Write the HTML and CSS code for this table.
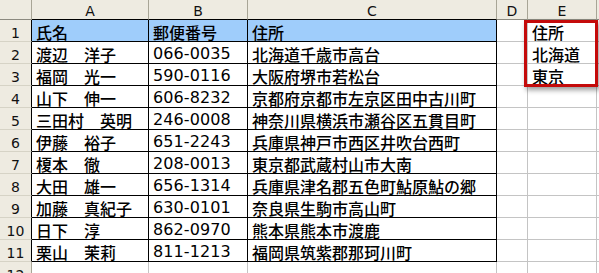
FILE: index.html
```html
<!DOCTYPE html>
<html lang="ja">
<head>
<meta charset="utf-8">
<link rel="stylesheet" href="styles.css">
</head>
<body>
<div class="sheet">
  <div class="ch corner"></div>
  <div class="ch tb">A</div>
  <div class="ch tb">B</div>
  <div class="ch tb">C</div>
  <div class="ch">D</div>
  <div class="ch">E</div>
  <div class="ch"></div>

  <div class="rh dk">1</div>
  <div class="c t hd">氏名</div><div class="c t hd">郵便番号</div><div class="c t hd">住所</div>
  <div class="c"></div><div class="c">住所</div><div class="c"></div>

  <div class="rh dk">2</div>
  <div class="c t">渡辺　洋子</div><div class="c t num">066-0035</div><div class="c t">北海道千歳市高台</div>
  <div class="c"></div><div class="c">北海道</div><div class="c"></div>

  <div class="rh dk">3</div>
  <div class="c t">福岡　光一</div><div class="c t num">590-0116</div><div class="c t">大阪府堺市若松台</div>
  <div class="c"></div><div class="c">東京</div><div class="c"></div>

  <div class="rh dk">4</div>
  <div class="c t">山下　伸一</div><div class="c t num">606-8232</div><div class="c t">京都府京都市左京区田中古川町</div>
  <div class="c"></div><div class="c"></div><div class="c"></div>

  <div class="rh dk">5</div>
  <div class="c t">三田村　英明</div><div class="c t num">246-0008</div><div class="c t">神奈川県横浜市瀬谷区五貫目町</div>
  <div class="c"></div><div class="c"></div><div class="c"></div>

  <div class="rh dk">6</div>
  <div class="c t">伊藤　裕子</div><div class="c t num">651-2243</div><div class="c t">兵庫県神戸市西区井吹台西町</div>
  <div class="c"></div><div class="c"></div><div class="c"></div>

  <div class="rh dk">7</div>
  <div class="c t">榎本　徹</div><div class="c t num">208-0013</div><div class="c t">東京都武蔵村山市大南</div>
  <div class="c"></div><div class="c"></div><div class="c"></div>

  <div class="rh dk">8</div>
  <div class="c t">大田　雄一</div><div class="c t num">656-1314</div><div class="c t">兵庫県津名郡五色町鮎原鮎の郷</div>
  <div class="c"></div><div class="c"></div><div class="c"></div>

  <div class="rh dk">9</div>
  <div class="c t">加藤　真紀子</div><div class="c t num">630-0101</div><div class="c t">奈良県生駒市高山町</div>
  <div class="c"></div><div class="c"></div><div class="c"></div>

  <div class="rh dk">10</div>
  <div class="c t">日下　淳</div><div class="c t num">862-0970</div><div class="c t">熊本県熊本市渡鹿</div>
  <div class="c"></div><div class="c"></div><div class="c"></div>

  <div class="rh dk">11</div>
  <div class="c t">栗山　茉莉</div><div class="c t num">811-1213</div><div class="c t">福岡県筑紫郡那珂川町</div>
  <div class="c"></div><div class="c"></div><div class="c"></div>

  <div class="rh">12</div>
  <div class="c"></div><div class="c"></div><div class="c"></div>
  <div class="c"></div><div class="c"></div><div class="c"></div>

  <div class="mark"></div>
</div>
</body>
</html>
```

FILE: styles.css
```css
html, body {
  margin: 0;
  padding: 0;
  background: #ffffff;
  overflow: hidden;
}

.sheet {
  position: relative;
  display: grid;
  grid-template-columns: 32px 117px 99px 249px 31px 69px 1fr;
  grid-template-rows: 20px repeat(12, 22px);
  width: 599px;
  height: 273px;
  overflow: hidden;
  font-family: "DejaVu Sans", "Noto Sans CJK JP", sans-serif;
  font-size: 16px;
  color: #000;
}

.sheet > div {
  box-sizing: border-box;
}

.ch {
  background: #eeebe1;
  border-right: 1px solid #a8a596;
  border-bottom: 1px solid #8c8a80;
  display: flex;
  align-items: center;
  justify-content: center;
  font-size: 14px;
  padding-top: 2px;
  color: #111;
}

.ch.tb {
  border-bottom-color: #000;
}

.rh {
  background: #eeebe1;
  border-right: 1px solid #a8a596;
  border-bottom: 1px solid #d6d3c6;
  display: flex;
  align-items: center;
  justify-content: center;
  font-size: 14px;
  padding-top: 5px;
  color: #111;
}

.rh.dk {
  border-right-color: #000;
}

.c {
  border-right: 1px solid #c4c4c4;
  border-bottom: 1px solid #c4c4c4;
  padding: 2px 0 0 4px;
  display: flex;
  align-items: center;
  white-space: nowrap;
  overflow: hidden;
  font-family: "Noto Sans CJK JP", "DejaVu Sans", sans-serif;
  font-weight: 500;
  line-height: 1;
}

.c.t {
  border-right-color: #000;
  border-bottom-color: #000;
}

.c.hd {
  background: #9fcdfb;
}

.c.num {
  font-family: "DejaVu Sans", sans-serif;
  font-weight: 400;
  letter-spacing: 0.1px;
}

.mark {
  position: absolute;
  left: 524px;
  top: 20px;
  width: 74px;
  height: 67px;
  border: 3px solid #c40a0a;
  box-shadow: 2px 3px 5px rgba(0, 0, 0, 0.4);
  pointer-events: none;
}
```
